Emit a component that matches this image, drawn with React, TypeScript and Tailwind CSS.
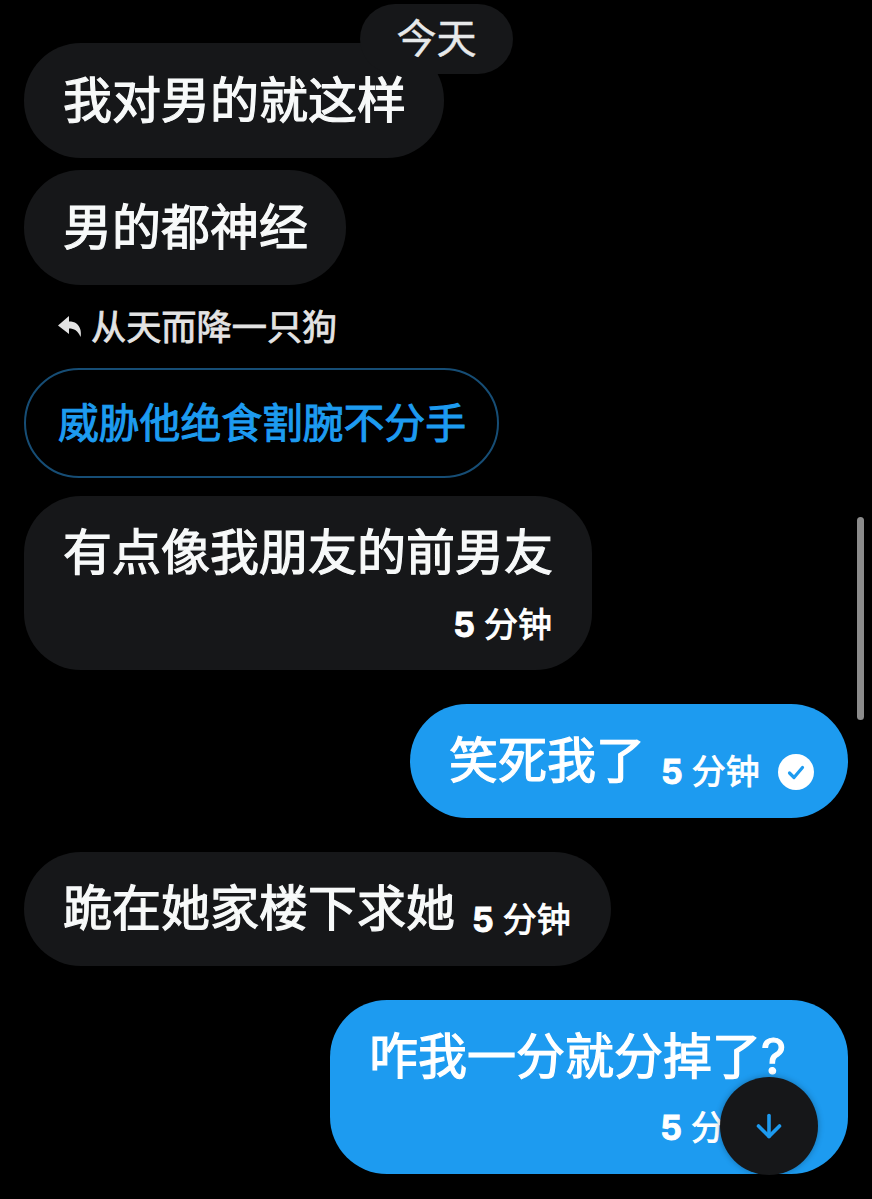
import { ArrowDown } from "lucide-react";

const FONT = "font-['Inter','Noto_Sans_CJK_SC',sans-serif]";
const BODY = "whitespace-nowrap text-[49px] leading-[60px] [-webkit-text-stroke:1.2px]";

function Time() {
  return (
    <span className="flex items-baseline gap-[9px] whitespace-nowrap text-[34px] leading-[40px] text-white [-webkit-text-stroke:0.9px]">
      <b className="font-bold">5</b>
      <span>分钟</span>
    </span>
  );
}

function Check() {
  return (
    <svg width="36" height="36" viewBox="0 0 36 36" className="shrink-0">
      <circle cx="18" cy="18" r="18" fill="#fff" />
      <path d="m11.500 19 4.500 4.500 8.500-10" fill="none" stroke="#1d9bf0" strokeWidth="3.200" strokeLinecap="round" strokeLinejoin="round" />
    </svg>
  );
}

function Bubble({ text, width }: { text: string; width: string }) {
  return (
    <div className={`flex h-[115px] items-center rounded-[57px] bg-[#161719] pl-[39px] ${width}`}>
      <span className={`${BODY} text-[#f7f9f9]`}>{text}</span>
    </div>
  );
}

export default function App() {
  return (
    <div className={`relative h-[1199px] w-[872px] overflow-hidden bg-black ${FONT}`}>
      <div className="flex flex-col items-start px-6 pt-[43px]">
        <Bubble text="我对男的就这样" width="w-[420px]" />
        <div className="mt-3">
          <Bubble text="男的都神经" width="w-[322px]" />
        </div>

        {/* 回复 */}
        <div className="mt-[23px] flex h-[38px] items-center gap-[10px] pl-[34px] text-[#e3e3e3]">
          <svg width="23" height="22" viewBox="0 0 23 22" fill="currentColor">
            <path d="M11 0 0 9.500 11 18v-5.500c5 0 9 2 11.500 8.500.5-2 .5-4 0-7C21 8 17 5.500 11 5.500z" />
          </svg>
          <span className="text-[35.2px] leading-[38px] [-webkit-text-stroke:0.8px]">从天而降一只狗</span>
        </div>

        <div className="mt-[22px] flex h-[110px] w-[475px] items-center rounded-[55px] border-2 border-[#164d75] pl-[32px]">
          <span className="whitespace-nowrap text-[40.8px] leading-[50px] text-[#1d9bf0] [-webkit-text-stroke:1px]">威胁他绝食割腕不分手</span>
        </div>

        <div className="mt-[18px] flex h-[174px] w-[568px] flex-col rounded-[57px] bg-[#161719] pl-[39px] pr-10 pt-[27px]">
          <span className={`${BODY} text-[#f7f9f9]`}>有点像我朋友的前男友</span>
          <div className="mt-[22px] flex justify-end">
            <Time />
          </div>
        </div>

        <div className="mt-[34px] flex h-[114px] w-[438px] items-center self-end rounded-[57px] bg-[#1d9bf0] pl-[39px]">
          <span className={`${BODY} text-white`}>笑死我了</span>
          <div className="ml-[16px] mt-[22px] flex items-center gap-[18px]">
            <Time />
            <Check />
          </div>
        </div>

        <div className="mt-[34px] flex h-[114px] w-[587px] items-center rounded-[57px] bg-[#161719] pl-[39px]">
          <span className={`${BODY} text-[#f7f9f9]`}>跪在她家楼下求她</span>
          <div className="ml-[17px] mt-[22px]">
            <Time />
          </div>
        </div>

        <div className="mt-[34px] flex h-[174px] w-[518px] flex-col self-end rounded-[57px] bg-[#1d9bf0] pl-[39px] pr-[35px] pt-[27px]">
          <span className={`${BODY} text-white`}>咋我一分就分掉了?</span>
          <div className="mt-[21px] flex items-center justify-end gap-[18px]">
            <Time />
            <Check />
          </div>
        </div>
      </div>

      {/* 悬浮元素 */}
      <div className="absolute left-[360px] top-[4px] flex h-[70px] w-[153px] items-center justify-center rounded-[35px] bg-[#161719]">
        <span className="text-[40px] leading-[48px] text-[#e7e9ea] [-webkit-text-stroke:0.5px]">今天</span>
      </div>
      <div className="absolute left-[857px] top-[517px] h-[203px] w-[7px] rounded-full bg-[#8b8b8b]" />
      <div className="absolute left-[720px] top-[1077px] flex h-[98px] w-[98px] items-center justify-center rounded-full bg-[#161719] shadow-[0_0_6px_rgba(0,0,0,0.3)]">
        <ArrowDown size={36} className="text-[#1d9bf0]" strokeWidth={2.4} />
      </div>
    </div>
  );
}
